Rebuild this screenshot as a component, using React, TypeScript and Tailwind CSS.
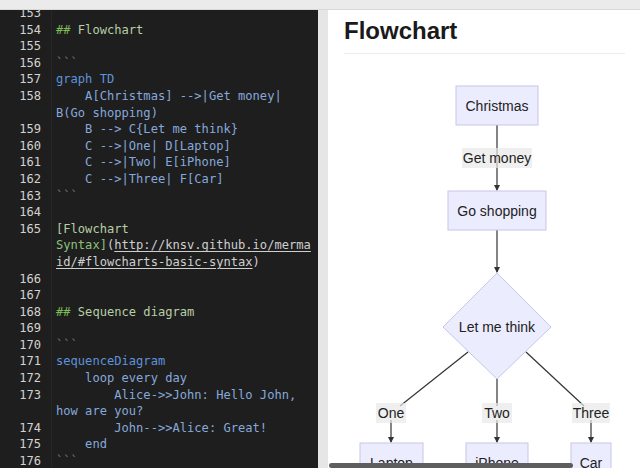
import React from "react";

type Tok = { t: string; c: string; u?: boolean };
type Line = { n?: number; toks: Tok[] };

const GREEN = "text-[#7dbb57]";
const PALE = "text-[#b7cfa6]";
const DIM = "text-[#7a7a7a]";
const BLUE = "text-[#5f92dc]";
const CODE = "text-[#86a9dc]";
const LINK = "text-[#cfcfcf]";

const lines: Line[] = [
  { n: 153, toks: [] },
  { n: 154, toks: [{ t: "## ", c: GREEN }, { t: "Flowchart", c: PALE }] },
  { n: 155, toks: [] },
  { n: 156, toks: [{ t: "```", c: DIM }] },
  { n: 157, toks: [{ t: "graph TD", c: BLUE }] },
  { n: 158, toks: [{ t: "    A[Christmas] -->|Get money|", c: CODE }] },
  { toks: [{ t: "B(Go shopping)", c: CODE }] },
  { n: 159, toks: [{ t: "    B --> C{Let me think}", c: CODE }] },
  { n: 160, toks: [{ t: "    C -->|One| D[Laptop]", c: CODE }] },
  { n: 161, toks: [{ t: "    C -->|Two| E[iPhone]", c: CODE }] },
  { n: 162, toks: [{ t: "    C -->|Three| F[Car]", c: CODE }] },
  { n: 163, toks: [{ t: "```", c: DIM }] },
  { n: 164, toks: [] },
  { n: 165, toks: [{ t: "[Flowchart", c: PALE }] },
  {
    toks: [
      { t: "Syntax]", c: "text-[#8fc07a]" },
      { t: "(", c: LINK },
      { t: "http://knsv.github.io/merma", c: LINK, u: true },
    ],
  },
  { toks: [{ t: "id/#flowcharts-basic-syntax", c: LINK, u: true }, { t: ")", c: LINK }] },
  { n: 166, toks: [] },
  { n: 167, toks: [] },
  { n: 168, toks: [{ t: "## ", c: GREEN }, { t: "Sequence diagram", c: PALE }] },
  { n: 169, toks: [] },
  { n: 170, toks: [{ t: "```", c: DIM }] },
  { n: 171, toks: [{ t: "sequenceDiagram", c: BLUE }] },
  { n: 172, toks: [{ t: "    loop every day", c: CODE }] },
  { n: 173, toks: [{ t: "        Alice->>John: Hello John,", c: CODE }] },
  { toks: [{ t: "how are you?", c: CODE }] },
  { n: 174, toks: [{ t: "        John-->>Alice: Great!", c: CODE }] },
  { n: 175, toks: [{ t: "    end", c: CODE }] },
  { n: 176, toks: [{ t: "```", c: DIM }] },
];

function Editor() {
  return (
    <div className="w-[318px] shrink-0 overflow-hidden bg-[#1e1e1e] font-['DejaVu_Sans_Mono',monospace] text-[12.1px] leading-[16.6px]">
      <div className="mt-[-5px]">
        {lines.map((l, i) => (
          <div key={i} className="flex h-[16.6px]">
            <div className="w-[41px] shrink-0 text-right text-[#d2d2d2]">{l.n ?? ""}</div>
            <div className="w-[11px] shrink-0 border-r border-[#262626]" />
            <div className="pl-[4px] whitespace-pre">
              {l.toks.map((tk, j) => (
                <span key={j} className={`${tk.c} ${tk.u ? "underline underline-offset-2" : ""}`}>
                  {tk.t}
                </span>
              ))}
            </div>
          </div>
        ))}
      </div>
    </div>
  );
}

function Box({ x1, x2, y, label }: { x1: number; x2: number; y: number; label: string }) {
  return (
    <g>
      <rect x={x1} y={y} width={x2 - x1} height={39} fill="#ececff" stroke="#c6c6e6" strokeWidth={1} />
      <text x={(x1 + x2) / 2} y={y + 24.5} textAnchor="middle" fontSize={14} fill="#222">
        {label}
      </text>
    </g>
  );
}

function EdgeLabel({ cx, cy, w, label }: { cx: number; cy: number; w: number; label: string }) {
  return (
    <g>
      <rect x={cx - w / 2} y={cy - 10} width={w} height={20} fill="#e8e8e8" opacity={0.7} />
      <text x={cx} y={cy + 5} textAnchor="middle" fontSize={14} fill="#222">
        {label}
      </text>
    </g>
  );
}

function Flow() {
  const arrow = (x: number, y: number) => (
    <path d={`M${x - 3},${y - 6} L${x + 3},${y - 6} L${x},${y} Z`} fill="#333" />
  );
  return (
    <svg
      viewBox="328 54 312 414"
      width={312}
      height={414}
      className="block font-['Liberation_Sans',Arial,sans-serif]"
    >
      <g stroke="#333" strokeWidth={1.2} fill="none">
        <line x1={497} y1={125} x2={497} y2={190} />
        <line x1={497} y1={230} x2={497} y2={272} />
        <line x1={468} y1={352} x2={400} y2={406} />
        <line x1={497} y1={378} x2={497} y2={406} />
        <line x1={526} y1={352} x2={584} y2={406} />
        <line x1={391} y1={420} x2={391} y2={442} />
        <line x1={497} y1={420} x2={497} y2={442} />
        <line x1={591} y1={420} x2={591} y2={442} />
      </g>
      {arrow(497, 191)}
      {arrow(497, 273)}
      {arrow(391, 443)}
      {arrow(497, 443)}
      {arrow(591, 443)}
      <Box x1={456} x2={538} y={86} label="Christmas" />
      <EdgeLabel cx={497} cy={158} w={70} label="Get money" />
      <Box x1={448} x2={546} y={191} label="Go shopping" />
      <polygon points="497,273 551,327 497,379 443,327" fill="#ececff" stroke="#c6c6e6" />
      <text x={497} y={332} textAnchor="middle" fontSize={14} fill="#222">
        Let me think
      </text>
      <EdgeLabel cx={391} cy={413} w={30} label="One" />
      <EdgeLabel cx={497} cy={413} w={30} label="Two" />
      <EdgeLabel cx={591} cy={413} w={38} label="Three" />
      <Box x1={360} x2={423} y={443} label="Laptop" />
      <Box x1={466} x2={528} y={443} label="iPhone" />
      <Box x1={571} x2={611} y={443} label="Car" />
    </svg>
  );
}

function Preview() {
  return (
    <div className="relative flex-1 overflow-hidden bg-white">
      <div className="px-[16px] pr-[15px]">
        <h1 className="h-[43px] pt-[6px] font-['Liberation_Sans',Arial,sans-serif] text-[24px] leading-[30px] font-bold text-[#1a1a1a]">
          Flowchart
        </h1>
        <div className="h-px bg-[#ececec]" />
      </div>
      <Flow />
      <div className="absolute bottom-0 left-[1px] h-[5px] w-[244px] rounded-sm bg-[#5e5e5e]" />
    </div>
  );
}

export default function App() {
  return (
    <div className="flex h-[468px] w-[640px] flex-col overflow-hidden bg-[#e9e9e9]">
      <div className="h-[10px] shrink-0 border-b border-[#d8d8d8] bg-[#ebebeb]" />
      <div className="flex min-h-0 flex-1">
        <Editor />
        <div className="w-[10px] shrink-0 bg-[#e6e6e6]" />
        <Preview />
      </div>
    </div>
  );
}
